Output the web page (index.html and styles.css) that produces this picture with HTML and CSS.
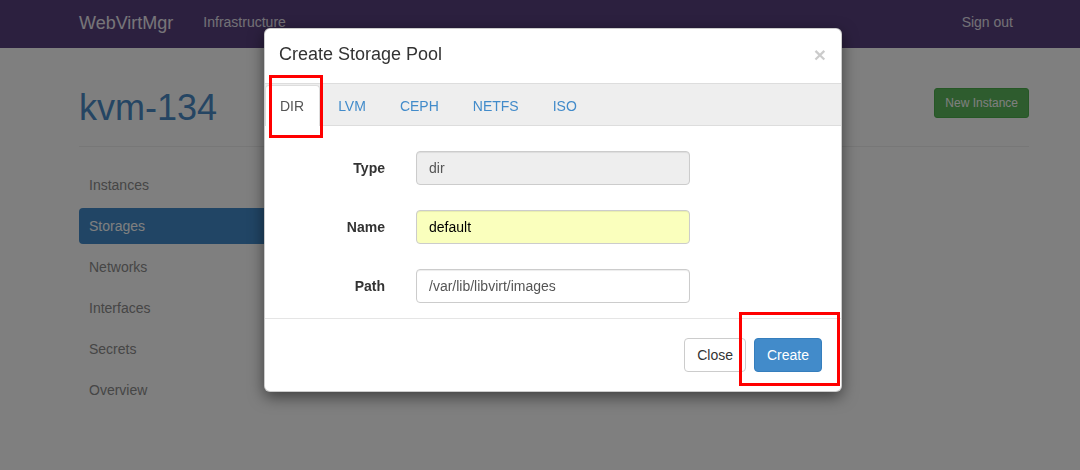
FILE: index.html
```html
<!DOCTYPE html>
<html lang="en">
<head>
<meta charset="utf-8">
<title>WebVirtMgr - Storages</title>
<link rel="stylesheet" href="styles.css">
</head>
<body>
<nav class="navbar">
  <a class="brand" href="#">WebVirtMgr</a>
  <a class="nav-link" href="#">Infrastructure</a>
  <span class="nav-spacer"></span>
  <a class="nav-link" href="#">Sign out</a>
</nav>

<main class="container">
  <div class="page-head">
    <h1 class="host-title">kvm-134</h1>
    <button class="btn btn-success btn-sm" type="button">New Instance</button>
  </div>
  <hr class="divider">
  <ul class="side-nav">
    <li><a href="#">Instances</a></li>
    <li class="active"><a href="#">Storages</a></li>
    <li><a href="#">Networks</a></li>
    <li><a href="#">Interfaces</a></li>
    <li><a href="#">Secrets</a></li>
    <li><a href="#">Overview</a></li>
  </ul>
</main>

<div class="backdrop"></div>

<div class="modal">
  <div class="modal-header">
    <h4 class="modal-title">Create Storage Pool</h4>
    <span class="close">&times;</span>
  </div>
  <ul class="tabs">
    <li class="tab active"><a href="#">DIR</a></li>
    <li class="tab"><a href="#">LVM</a></li>
    <li class="tab"><a href="#">CEPH</a></li>
    <li class="tab"><a href="#">NETFS</a></li>
    <li class="tab"><a href="#">ISO</a></li>
  </ul>
  <form class="modal-body">
    <label class="control-label">Type</label>
    <input class="form-control readonly" type="text" value="dir" readonly>
    <label class="control-label">Name</label>
    <input class="form-control autofill" type="text" value="default">
    <label class="control-label">Path</label>
    <input class="form-control" type="text" value="/var/lib/libvirt/images">
  </form>
  <div class="modal-footer">
    <button class="btn btn-default" type="button">Close</button>
    <button class="btn btn-primary" type="button">Create</button>
  </div>
</div>

<div class="mark mark-tab"></div>
<div class="mark mark-create"></div>
</body>
</html>
```

FILE: styles.css
```css
* { box-sizing: border-box; }

html, body {
  margin: 0;
  padding: 0;
}

body {
  width: 1080px;
  height: 470px;
  overflow: hidden;
  background: #ffffff;
  font-family: "Liberation Sans", Arial, sans-serif;
  font-size: 14px;
  line-height: 20px;
  color: #333333;
}

a { text-decoration: none; }

/* ---------- navbar ---------- */
.navbar {
  display: flex;
  align-items: flex-start;
  height: 48px;
  padding: 0 67px 0 79px;
  background: #58407f;
}

.brand {
  padding-top: 13px;
  font-size: 18px;
  line-height: 20px;
  color: #eeeaf2;
}

.nav-link {
  padding-top: 12px;
  font-size: 14px;
  line-height: 20px;
  color: #e6e2ec;
}

.brand + .nav-link { margin-left: 30px; }

.nav-spacer { flex: 1; }

/* ---------- page ---------- */
.container {
  width: 950px;
  margin-left: 79px;
  padding-top: 40px;
}

.page-head {
  display: flex;
  justify-content: space-between;
  align-items: flex-start;
}

.host-title {
  margin: 0;
  font-size: 36px;
  line-height: 40px;
  font-weight: 400;
  color: #4a8bc6;
}

.btn {
  display: inline-block;
  border: 1px solid transparent;
  border-radius: 4px;
  font-family: inherit;
  font-size: 14px;
  line-height: 20px;
  padding: 6px 12px;
  cursor: pointer;
}

.btn-sm {
  font-size: 12px;
  line-height: 18px;
  padding: 5px 10px;
  border-radius: 3px;
}

.btn-success {
  background: #5cb85c;
  border-color: #4cae4c;
  color: #ffffff;
}

.btn-default {
  background: #ffffff;
  border-color: #cccccc;
  color: #333333;
}

.btn-primary {
  background: #428bca;
  border-color: #357ebd;
  color: #ffffff;
}

.divider {
  margin: 18px 0 0;
  border: 0;
  border-top: 1px solid #eeeeee;
}

.side-nav {
  list-style: none;
  margin: 20px 0 0;
  padding: 0;
  width: 232px;
  display: flex;
  flex-direction: column;
  gap: 5px;
}

.side-nav a {
  display: block;
  padding: 8px 10px;
  border-radius: 4px;
  color: #8c8c8c;
}

.side-nav .active a {
  background: #428bca;
  color: #ffffff;
}

/* ---------- overlay + modal ---------- */
.backdrop {
  position: fixed;
  inset: 0;
  background: rgba(0, 0, 0, 0.5);
  z-index: 10;
}

.modal {
  position: absolute;
  left: 264px;
  top: 28px;
  width: 578px;
  background: #ffffff;
  border: 1px solid rgba(0, 0, 0, 0.2);
  border-radius: 6px;
  box-shadow: 0 5px 15px rgba(0, 0, 0, 0.5);
  z-index: 20;
  overflow: hidden;
}

.modal-header {
  display: flex;
  justify-content: space-between;
  align-items: flex-start;
  height: 55px;
  padding: 12px 15px 0 14px;
  border-bottom: 1px solid #dddddd;
}

.modal-title {
  margin: 0;
  font-size: 18px;
  line-height: 26px;
  font-weight: 400;
  color: #333333;
}

.close {
  margin-top: 3px;
  font-size: 21px;
  line-height: 21px;
  font-weight: 700;
  color: #000000;
  opacity: 0.2;
}

.tabs {
  list-style: none;
  margin: 0;
  padding: 1px 0 0;
  display: flex;
  gap: 3px;
  background: #eeeeee;
  border-bottom: 1px solid #dddddd;
}

.tab {
  margin-bottom: -1px;
}

.tab a {
  display: block;
  padding: 10px 15px 10px 14px;
  border: 1px solid transparent;
  border-bottom: 0;
  border-radius: 4px 4px 0 0;
  line-height: 20px;
  color: #428bca;
}

.tab.active a {
  background: #ffffff;
  border-color: #dddddd;
  color: #555555;
}

.modal-body {
  display: grid;
  grid-template-columns: 120px 274px;
  column-gap: 31px;
  row-gap: 25px;
  align-items: center;
  margin: 0;
  padding: 25px 0 15px;
}

.control-label {
  text-align: right;
  font-weight: 700;
  color: #333333;
}

.form-control {
  display: block;
  width: 100%;
  height: 34px;
  padding: 6px 12px;
  font-family: inherit;
  font-size: 14px;
  line-height: 20px;
  color: #555555;
  background: #ffffff;
  border: 1px solid #cccccc;
  border-radius: 4px;
  box-shadow: inset 0 1px 1px rgba(0, 0, 0, 0.075);
}

.form-control.readonly { background: #eeeeee; }

.form-control.autofill {
  background: #faffbd;
  color: #000000;
}

.modal-footer {
  display: flex;
  justify-content: flex-end;
  gap: 8px;
  padding: 19px 19px 19px;
  border-top: 1px solid #e5e5e5;
}

/* ---------- annotation marks ---------- */
.mark {
  position: absolute;
  border: 3px solid #ff0000;
  z-index: 30;
}

.mark-tab {
  left: 269px;
  top: 75px;
  width: 54px;
  height: 63px;
}

.mark-create {
  left: 739px;
  top: 312px;
  width: 101px;
  height: 74px;
}
```
